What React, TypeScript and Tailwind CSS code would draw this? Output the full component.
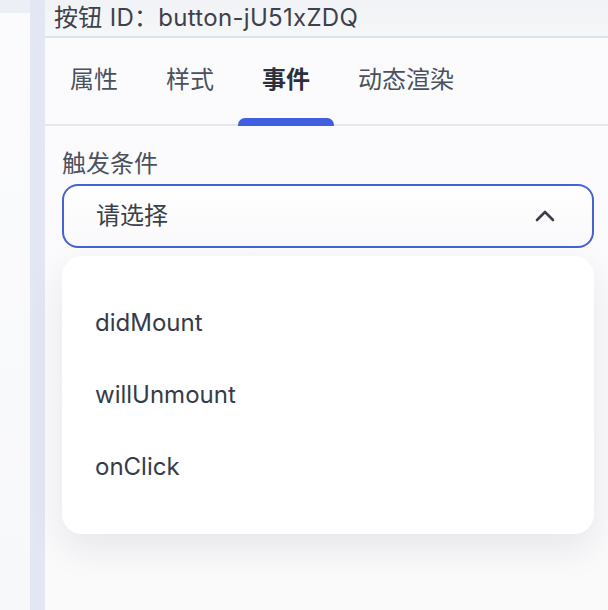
import React from "react";

export default function App() {
  const tabs = ["属性", "样式", "事件", "动态渲染"];
  const items = ["didMount", "willUnmount", "onClick"];
  return (
    <div
      className="flex h-[610px] w-[608px] overflow-hidden bg-white"
      style={{ fontFamily: 'Inter, "Noto Sans CJK SC", sans-serif' }}
    >
      <div className="flex w-[30px] flex-col">
        <div className="h-[13px] bg-[#eceff5]" />
        <div className="flex-1 bg-gradient-to-b from-[#fbfbfd] to-[#f7f8fa]" />
      </div>
      <div className="w-[15px] bg-[#e3e7f3]" />
      <div className="flex flex-1 flex-col bg-gradient-to-b from-[#fbfbfd] to-[#fafafb]">
        <div className="flex h-[38px] items-center whitespace-pre border-b-2 border-[#dfe2ea] bg-gradient-to-b from-[#f1f2f5] to-[#f6f7f9] pl-[9px] text-[24px] tracking-[0.3px] text-[#3c414c]">
          按钮 ID：button-jU51xZDQ
        </div>
        <div className="flex h-[88px] border-b-2 border-[#e6e7eb] pl-[1px]">
          {tabs.map((t, i) => (
            <div
              key={t}
              className={
                "relative flex items-center px-[24px] pb-[2px] text-[24px] " +
                (i === 2 ? "font-semibold text-[#2b303b]" : "text-[#4b515c]")
              }
            >
              {t}
              {i === 2 && (
                <div className="absolute bottom-[-2px] left-0 right-0 h-[8px] rounded-t-[7px] bg-[#3f5fe0]" />
              )}
            </div>
          ))}
        </div>
        <div className="flex flex-col pl-[17px] pr-[14px] pt-[23px]">
          <div className="h-[30px] text-[24px] leading-[30px] text-[#4b515c]">触发条件</div>
          <div className="mt-[5px] flex h-[64px] items-center justify-between rounded-[16px] border-2 border-[#4462d3] bg-gradient-to-b from-white to-[#f9f9fb] pl-[32px] pr-[36px]">
            <span className="text-[24px] text-[#3a3f4a]">请选择</span>
            <svg width="22" height="14" viewBox="0 0 22 14" fill="none">
              <path d="M3 11 L11 3 L19 11" stroke="#3a3f4a" strokeWidth="2.6" strokeLinecap="round" strokeLinejoin="round" />
            </svg>
          </div>
          <div className="mt-[8px] flex flex-col rounded-[20px] bg-white px-[33px] py-[31px] shadow-[0_14px_36px_rgba(30,35,60,0.09)]">
            {items.map((it) => (
              <div key={it} className="flex h-[72px] items-center text-[24px] font-normal text-[#353b48]">
                {it}
              </div>
            ))}
          </div>
        </div>
      </div>
    </div>
  );
}
